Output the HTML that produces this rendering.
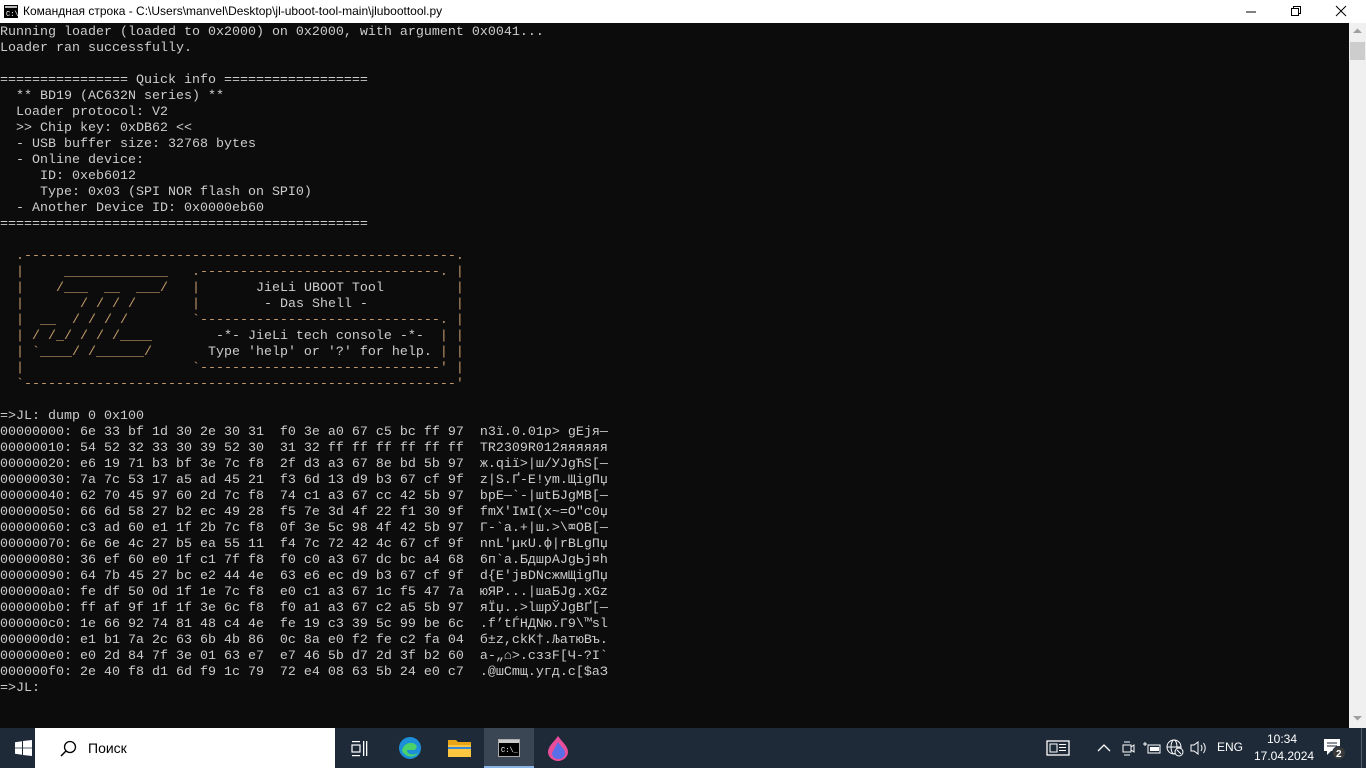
<!DOCTYPE html>
<html><head><meta charset="utf-8"><style>
*{margin:0;padding:0;box-sizing:border-box}
body{width:1366px;height:768px;overflow:hidden;background:#0c0c0c;position:relative;font-family:"Liberation Sans",sans-serif}
#title{position:absolute;left:0;top:0;width:1366px;height:23px;background:#fff;color:#000;font-size:12px}
#title .t{position:absolute;left:23px;top:4px;white-space:nowrap}
#con{position:absolute;left:0;top:23px;width:1349px;height:705px;background:#0c0c0c;padding-top:2px}
pre{font-family:"Liberation Mono","DejaVu Sans Mono",monospace;font-size:13.33px;line-height:16px;color:#cccccc;white-space:pre;letter-spacing:0}
.o{color:#c39a6b}
#sb{position:absolute;left:1349px;top:23px;width:17px;height:705px;background:#f0f0f0}
#tb{position:absolute;left:0;top:728px;width:1366px;height:40px;background:#1e2a38;color:#fff}
.ic{position:absolute;top:0;height:40px}
</style></head><body>
<div id="title">
<svg style="position:absolute;left:4px;top:5px" width="14" height="13"><rect x="0" y="0" width="14" height="13" fill="#000"/><rect x="1" y="1" width="12" height="2" fill="#bbb"/><text x="2" y="11" font-size="7" fill="#fff" font-family="Liberation Mono">C:\</text></svg>
<span class="t">Командная строка - C:\Users\manvel\Desktop\jl-uboot-tool-main\jluboottool.py</span>
<svg style="position:absolute;left:1245px;top:6px" width="12" height="12"><line x1="1" y1="6" x2="11" y2="6" stroke="#000"/></svg>
<svg style="position:absolute;left:1290px;top:5px" width="12" height="12"><rect x="1.5" y="3.5" width="7" height="7" fill="none" stroke="#000"/><path d="M3.5 3.5V1.5H10.5V8.5H8.5" fill="none" stroke="#000"/></svg>
<svg style="position:absolute;left:1335px;top:5px" width="12" height="12"><path d="M1 1L11 11M11 1L1 11" stroke="#000"/></svg>
</div>
<div id="con"><pre>Running loader (loaded to 0x2000) on 0x2000, with argument 0x0041...
Loader ran successfully.

================ Quick info ==================
  ** BD19 (AC632N series) **
  Loader protocol: V2
  &gt;&gt; Chip key: 0xDB62 &lt;&lt;
  - USB buffer size: 32768 bytes
  - Online device:
     ID: 0xeb6012
     Type: 0x03 (SPI NOR flash on SPI0)
  - Another Device ID: 0x0000eb60
==============================================

<span class="o">  .------------------------------------------------------.</span>
<span class="o">  |     _____________   .------------------------------. |</span>
<span class="o">  |    /___  __  ___/   |</span>       JieLi UBOOT Tool         <span class="o">|</span>
<span class="o">  |       / / / /       |</span>        - Das Shell -           <span class="o">|</span>
<span class="o">  |  __  / / / /        `------------------------------. |</span>
<span class="o">  | / /_/ / / /____</span>        -*- JieLi tech console -*-  <span class="o">| |</span>
<span class="o">  | `____/ /______/</span>       Type 'help' or '?' for help. <span class="o">| |</span>
<span class="o">  |                     `------------------------------' |</span>
<span class="o">  `------------------------------------------------------'</span>

=&gt;JL: dump 0 0x100
00000000: 6e 33 bf 1d 30 2e 30 31  f0 3e a0 67 c5 bc ff 97  n3ï.0.01p&gt; gEjя—
00000010: 54 52 32 33 30 39 52 30  31 32 ff ff ff ff ff ff  TR2309R012яяяяяя
00000020: e6 19 71 b3 bf 3e 7c f8  2f d3 a3 67 8e bd 5b 97  ж.qiï&gt;|ш/УJgЋS[—
00000030: 7a 7c 53 17 a5 ad 45 21  f3 6d 13 d9 b3 67 cf 9f  z|S.Ґ-E!ym.ЩigПџ
00000040: 62 70 45 97 60 2d 7c f8  74 c1 a3 67 cc 42 5b 97  bpE—`-|шtБJgМB[—
00000050: 66 6d 58 27 b2 ec 49 28  f5 7e 3d 4f 22 f1 30 9f  fmX'ІмI(х~=O"с0џ
00000060: c3 ad 60 e1 1f 2b 7c f8  0f 3e 5c 98 4f 42 5b 97  Г-`а.+|ш.&gt;\⌧OB[—
00000070: 6e 6e 4c 27 b5 ea 55 11  f4 7c 72 42 4c 67 cf 9f  nnL'µкU.ф|rBLgПџ
00000080: 36 ef 60 e0 1f c1 7f f8  f0 c0 a3 67 dc bc a4 68  6п`а.БдшрАJgЬj¤h
00000090: 64 7b 45 27 bc e2 44 4e  63 e6 ec d9 b3 67 cf 9f  d{E'jвDNcжмЩigПџ
000000a0: fe df 50 0d 1f 1e 7c f8  e0 c1 a3 67 1c f5 47 7a  юЯP...|шаБJg.xGz
000000b0: ff af 9f 1f 1f 3e 6c f8  f0 a1 a3 67 c2 a5 5b 97  яЇџ..&gt;lшрЎJgВҐ[—
000000c0: 1e 66 92 74 81 48 c4 4e  fe 19 c3 39 5c 99 be 6c  .f’tЃНДNю.Г9\™sl
000000d0: e1 b1 7a 2c 63 6b 4b 86  0c 8a e0 f2 fe c2 fa 04  б±z,ckK†.ЉатюВъ.
000000e0: e0 2d 84 7f 3e 01 63 e7  e7 46 5b d7 2d 3f b2 60  а-„⌂&gt;.cззF[Ч-?І`
000000f0: 2e 40 f8 d1 6d f9 1c 79  72 e4 08 63 5b 24 e0 c7  .@шСmщ.yгд.c[$аЗ
=&gt;JL:</pre></div>
<div id="sb"><svg style="position:absolute;left:4px;top:5px" width="9" height="6"><path d="M0 5L4.5 0.5L9 5Z" fill="#a0a0a0"/></svg><div style="position:absolute;left:1px;top:19px;width:15px;height:18px;background:#cdcdcd"></div><svg style="position:absolute;left:4px;top:692px" width="9" height="6"><path d="M0 1L4.5 5.5L9 1Z" fill="#a0a0a0"/></svg></div>
<div id="tb">
<svg class="ic" style="left:15px;top:12px;height:16px" width="17" height="16"><path d="M0 2.2L7 1.2V7.6H0ZM8 1L17 0V7.6H8ZM0 8.4H7V14.8L0 13.8ZM8 8.4H17V16L8 15Z" fill="#fff"/></svg>
<div style="position:absolute;left:35px;top:0;width:300px;height:40px;background:#fff"></div>
<svg class="ic" style="left:60px;top:12px;height:17px" width="17" height="17"><circle cx="10" cy="7" r="5.5" fill="none" stroke="#000" stroke-width="1.3"/><line x1="6" y1="11" x2="1" y2="16" stroke="#000" stroke-width="1.5"/></svg>
<span style="position:absolute;left:88px;top:12px;font-size:14px;color:#000">Поиск</span>
<svg class="ic" style="left:351px;top:12px;height:17px" width="18" height="17"><rect x="1" y="1" width="8" height="1.2" fill="#fff"/><rect x="1" y="5" width="8" height="7" fill="none" stroke="#fff" stroke-width="1.2"/><rect x="1" y="15" width="8" height="1.2" fill="#fff"/><rect x="12" y="1" width="1.3" height="15" fill="#fff"/><rect x="15" y="1" width="1.3" height="15" fill="#fff"/></svg>
<svg class="ic" style="left:398px;top:8px;height:24px" width="24" height="24"><circle cx="12" cy="12" r="11" fill="#1d8fd8"/><path d="M4 15C5 8 12 5 17 8C20 10 19 14 15 14H9C9 18 14 20 20 17C17 22 8 22 4 15Z" fill="#4bd26b"/></svg>
<svg class="ic" style="left:448px;top:10px;height:20px" width="23" height="20"><path d="M0 2H8L10 4H23V19H0Z" fill="#e8a317"/><rect x="0" y="7" width="23" height="12" fill="#fcc640"/><rect x="0" y="9" width="23" height="2" fill="#3a89d6"/></svg>
<div style="position:absolute;left:484px;top:0;width:50px;height:40px;background:#3a4654"></div>
<div style="position:absolute;left:484px;top:38px;width:50px;height:2px;background:#8ab4e6"></div>
<svg class="ic" style="left:498px;top:11px;height:18px" width="22" height="18"><rect x="0.5" y="0.5" width="21" height="17" fill="#000" stroke="#aaa"/><rect x="1" y="1" width="20" height="3" fill="#ccc"/><text x="3" y="13" font-size="7" fill="#fff" font-family="Liberation Mono">C:\_</text></svg>
<svg class="ic" style="left:547px;top:8px;height:25px" width="22" height="25"><path d="M11 0C15 6 21 10 21 16C21 21 16 25 11 25C6 25 1 21 1 16C1 10 7 6 11 0Z" fill="#e94e9b"/><path d="M11 6C14 11 18 13 18 17C18 21 15 23 11 23C8 23 5 21 5 17Z" fill="#5a6ee8"/></svg>
<svg class="ic" style="left:1046px;top:12px;height:16px" width="25" height="16"><rect x="1" y="1" width="22" height="14" fill="none" stroke="#fff" stroke-width="1.3"/><rect x="4" y="4" width="7" height="8" fill="none" stroke="#fff"/><rect x="13" y="4" width="7" height="1" fill="#fff"/><rect x="13" y="7" width="7" height="1" fill="#fff"/><rect x="13" y="10" width="7" height="1" fill="#fff"/></svg>
<svg class="ic" style="left:1097px;top:15px;height:10px" width="14" height="10"><path d="M1 8L7 2L13 8" fill="none" stroke="#fff" stroke-width="1.3"/></svg>
<svg class="ic" style="left:1121px;top:12px;height:18px" width="14" height="18"><rect x="2" y="5" width="8" height="7" fill="none" stroke="#fff"/><path d="M10 7L13 5V12L10 10" fill="none" stroke="#fff"/><path d="M3 2H9M3 15H9" stroke="#fff"/></svg>
<svg class="ic" style="left:1143px;top:13px;height:14px" width="18" height="14"><rect x="5" y="4" width="12" height="8" fill="none" stroke="#fff"/><rect x="7" y="6" width="9" height="4" fill="#fff"/><path d="M0 3H4M2 1V5" stroke="#fff"/></svg>
<svg class="ic" style="left:1166px;top:11px;height:18px" width="18" height="18"><circle cx="8" cy="8" r="7" fill="none" stroke="#fff"/><ellipse cx="8" cy="8" rx="3" ry="7" fill="none" stroke="#fff"/><path d="M1 8H15" stroke="#fff"/><circle cx="13" cy="13" r="4" fill="#1e2a38" stroke="#fff"/><path d="M11 11L15 15" stroke="#fff"/></svg>
<svg class="ic" style="left:1190px;top:12px;height:16px" width="18" height="16"><path d="M1 5H4L8 2V14L4 11H1Z" fill="none" stroke="#fff"/><path d="M11 5Q13 8 11 11M13.5 3Q17 8 13.5 13" fill="none" stroke="#fff"/></svg>
<span style="position:absolute;left:1217px;top:12px;font-size:12px">ENG</span>
<span style="position:absolute;left:1267px;top:4px;font-size:12px">10:34</span>
<span style="position:absolute;left:1254px;top:21px;font-size:12px">17.04.2024</span>
<svg class="ic" style="left:1323px;top:10px;height:22px" width="24" height="22"><path d="M1 1H17V13H8L4 17V13H1Z" fill="#fff"/><path d="M4 5H14M4 8H14" stroke="#1e2a38"/><circle cx="16" cy="15" r="6.5" fill="#3a3a3a" stroke="#1e2a38"/><text x="13" y="19" font-size="10" font-weight="bold" fill="#fff" font-family="Liberation Sans">2</text></svg>
<div style="position:absolute;left:1361px;top:0;width:1px;height:40px;background:#55606c"></div>
</div>
</body></html>
